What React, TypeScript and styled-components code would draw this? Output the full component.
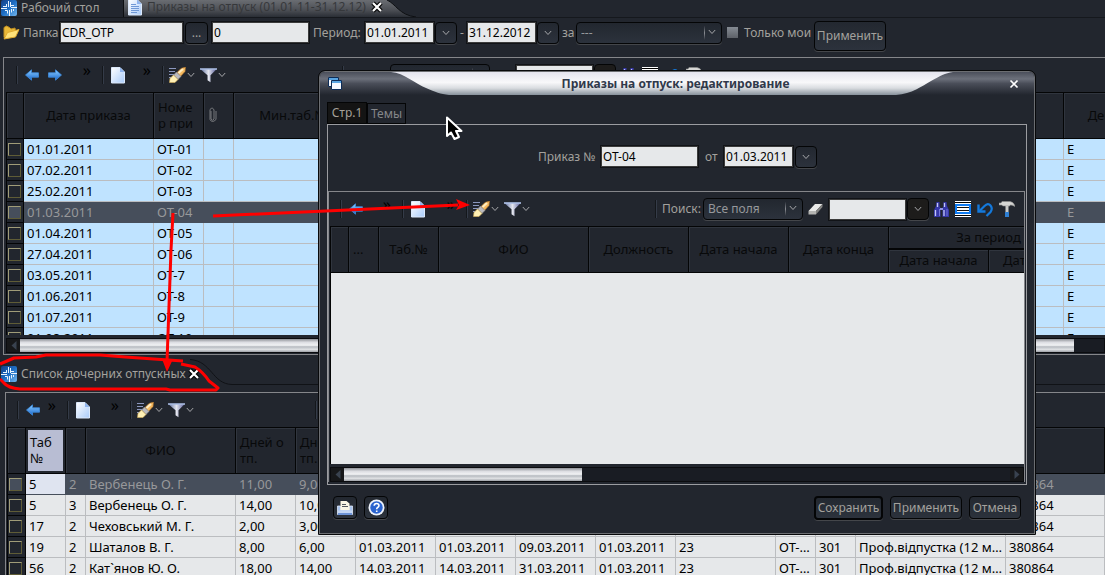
import React from "react";
import styled, { createGlobalStyle, css } from "styled-components";

const c = {
  bg: "#22262e",
  text: "#a3a19d",
  line: "#85868a",
  black: "#040506",
  field: "#e6e8ea",
  blue: "#bfe3ff",
  selected: "#464e5b",
  selectedText: "#97989a",
  red: "#ff0000",
};

const GlobalStyle = createGlobalStyle`
  *, *::before, *::after { box-sizing: border-box; }
  body {
    margin: 0;
    background: ${c.bg};
    color: ${c.text};
    font: 12px/16px "Noto Sans", "Open Sans", sans-serif;
    overflow: hidden;
  }
  button, input, select { font: inherit; color: inherit; margin: 0; }
`;

const Page = styled.div`
  position: relative;
  display: flex;
  flex-direction: column;
  height: 100vh;
  overflow: hidden;
`;

/* ---------- tabs ---------- */

const TopTabs = styled.nav`
  display: flex;
  flex: none;
  height: 18px;
  border-bottom: 1px solid #15181d;
`;

const DesktopTab = styled.a`
  display: flex;
  align-items: center;
  gap: 4px;
  width: 124px;
  height: 17px;
  padding: 0 0 2px 1px;
  border-right: 1px solid #0d0f12;
  color: ${c.text};
  text-decoration: none;
`;

const OrdersTab = styled.div`
  position: relative;
  display: flex;
  align-items: center;
  width: 292px;
  height: 17px;
  padding: 0 0 3px 4px;
  color: #36383b;

  & > svg:first-child { position: absolute; left: 0; top: 0; }
  & > svg + svg { position: relative; flex: none; margin-right: 5px; }
`;

const TabTitle = styled.span`
  position: relative;
  width: 224px;
  white-space: nowrap;
`;

const TabClose = styled.button`
  position: relative;
  display: flex;
  padding: 0;
  border: 0;
  background: none;
`;

const ChildTabs = styled.nav`
  position: relative;
  flex: none;
  display: flex;
  align-items: center;
  gap: 4px;
  height: 37px;
  padding: 0 0 0 1px;

  & > svg:last-child { position: absolute; left: 190px; top: 4px; }
`;

const ChildTitle = styled.span`
  width: 163px;
  white-space: nowrap;
`;

/* ---------- form controls ---------- */

const FilterBar = styled.form`
  display: flex;
  flex: none;
  align-items: flex-start;
  height: 39px;
  padding: 3px;
  white-space: nowrap;
`;

const FilterFields = styled.div`
  display: flex;
  align-items: center;
  height: 23px;
  width: 811px;
`;

const Label = styled.label<{ $w: number }>`
  flex: none;
  width: ${(p) => p.$w}px;
`;

const Field = styled.input<{ $w: number }>`
  flex: none;
  width: ${(p) => p.$w}px;
  height: 23px;
  padding: 0 2px;
  border: 1px solid #111317;
  outline: 1px solid #3b3b3b;
  outline-offset: -2px;
  background: ${c.field};
  color: #000;
`;

const Button = styled.button<{ $w?: number; $h?: number; $dark?: boolean; $primary?: boolean }>`
  display: flex;
  flex: none;
  align-items: center;
  justify-content: center;
  width: ${(p) => p.$w ?? 22}px;
  height: ${(p) => p.$h ?? 22}px;
  padding: 0;
  border: ${(p) => (p.$primary ? 2 : 1)}px solid ${c.black};
  border-radius: 4px;
  background: ${(p) => (p.$dark ? "#1d1c1b" : "linear-gradient(#232830, #2c323c)")};
  box-shadow: 0 1px 0 #44464a;
  color: ${c.text};
`;

const SelectBox = styled.div<{ $w: number }>`
  position: relative;
  flex: none;
  width: ${(p) => p.$w}px;
  height: 22px;

  & > svg { position: absolute; right: 6px; top: 7px; pointer-events: none; }
  &::after {
    content: "";
    position: absolute;
    right: 17px;
    top: 4px;
    width: 1px;
    height: 14px;
    background: linear-gradient(#2a2f38, #8b8e94, #2a2f38);
  }
`;

const Select = styled.select`
  appearance: none;
  width: 100%;
  height: 100%;
  padding: 0 20px 0 4px;
  border: 1px solid ${c.black};
  border-radius: 4px;
  background: linear-gradient(#22272f, #2c323c);
  box-shadow: 0 1px 0 #44464a;
  color: #96989b;
`;

const OnlyMine = styled.input`
  appearance: none;
  flex: none;
  width: 11px;
  height: 11px;
  background: linear-gradient(#858b93, #5d6168);
`;

const Spacer = styled.span<{ $w: number }>`
  flex: none;
  width: ${(p) => p.$w}px;
`;

/* ---------- toolbar ---------- */

const Bar = styled.div`
  display: flex;
  align-items: center;
  height: 34px;
  padding-left: 10px;
`;

const Group = styled.div<{ $w?: number }>`
  display: flex;
  flex: none;
  align-items: center;
  width: ${(p) => (p.$w ? p.$w + "px" : "auto")};
  height: 22px;
  gap: 5px;

  &::before {
    content: "";
    flex: none;
    width: 2px;
    height: 18px;
    background: #14171b;
    border-right: 1px solid #343b48;
  }
`;

const Navigation = styled.div`
  display: flex;
  gap: 9px;
  padding-left: 2px;
`;

const SearchIcons = styled.div`
  display: flex;
  align-items: center;
  gap: 6px;
`;

const Combo = styled.div`
  display: flex;
  align-items: center;
`;

const Tool = styled.button`
  display: flex;
  flex: none;
  align-items: center;
  gap: 1px;
  padding: 0;
  border: 0;
  background: none;
  color: inherit;
`;

const More = styled.button`
  align-self: flex-start;
  margin-left: auto;
  margin-right: 11px;
  padding: 0;
  border: 0;
  background: none;
  color: #000;
  font-size: 16px;
  line-height: 12px;
`;

/* ---------- tables ---------- */

const TopPanel = styled.section`
  flex: none;
  margin-left: 3px;
  padding-left: 2px;
  border: solid ${c.line};
  border-width: 1px 0 1px 1px;
  overflow: hidden;
`;

const ChildPanel = styled.section`
  flex: 1;
  min-height: 0;
  margin-left: 5px;
  padding-left: 1px;
  border: solid ${c.line};
  border-width: 1px 0 0 1px;
  overflow: hidden;
`;

const Viewport = styled.div<{ $h?: number; $fill?: boolean }>`
  height: ${(p) => (p.$h ? p.$h + "px" : "auto")};
  overflow: hidden;
  border-left: 1px solid ${c.black};
  background: ${(p) => (p.$fill ? c.field : "transparent")};
`;

const Table = styled.table<{ $w?: number }>`
  width: ${(p) => (p.$w ? p.$w + "px" : "100%")};
  table-layout: fixed;
  border-collapse: separate;
  border-spacing: 0;
  font-size: 13px;
  line-height: 16px;
`;

const Th = styled.th<{ $h?: number; $left?: boolean; $active?: boolean }>`
  height: ${(p) => p.$h ?? 47}px;
  padding: ${(p) => (p.$left ? "0 4px 2px" : "0 0 2px")};
  border-top: 1px solid ${c.black};
  border-right: 1px solid ${c.black};
  border-bottom: 1px solid ${c.black};
  box-shadow: inset 1px 1px 0 #30353e;
  background: ${c.bg};
  color: #08090a;
  font-weight: 400;
  text-align: ${(p) => (p.$left ? "left" : "center")};
  overflow: hidden;
  white-space: ${(p) => (p.$left ? "pre-line" : "nowrap")};
  ${(p) =>
    p.$active &&
    css`
      background: #b8bdd3;
      box-shadow: inset 0 0 0 2px ${c.bg};
    `}

  & > svg { display: block; margin: 0 auto 0 4px; }
`;

const Row = styled.tr<{ $tone: string; $on?: boolean }>`
  background: ${(p) => (p.$on ? c.selected : p.$tone)};
  color: ${(p) => (p.$on ? c.selectedText : "#000")};
  & > td {
    border-color: ${(p) => (p.$on ? c.selected : "#bbbdc0")};
  }
`;

const Td = styled.td<{ $focus?: boolean }>`
  height: 21px;
  padding: 0 0 0 3px;
  border-right: 1px solid;
  border-bottom: 1px solid;
  overflow: hidden;
  white-space: nowrap;
  text-overflow: ellipsis;
  ${(p) => p.$focus && css`background: #dfe4f0; color: #000;`}
`;

const CheckTd = styled.td`
  height: 21px;
  padding: 0;
  && { border: solid ${c.black}; border-width: 0 1px 1px 0; }
  background: ${c.bg};
`;

const RowCheck = styled.input`
  appearance: none;
  display: block;
  width: 13px;
  height: 13px;
  margin: 0 0 0 1px;
  border: 1px solid;
  border-color: #a09c78 #5f5c36 #5f5c36 #a09c78;
  background: ${c.bg};
  &:checked { background: ${c.selected}; }
`;

/* ---------- scroll bars ---------- */

const ScrollTrack = styled.div`
  display: flex;
  height: 15px;
  margin: 3px 0 1px;
  border: 1px solid #0b0c0f;
  background: #191c23;
`;

const ScrollEnd = styled.button`
  display: flex;
  flex: none;
  align-items: center;
  justify-content: center;
  width: 13px;
  padding: 0;
  border: 0;
  background: #17181a;
`;

const Thumb = styled.div<{ $w: string }>`
  width: ${(p) => p.$w};
  background: linear-gradient(#8d9096, #dcdde2 25%, #f1f2f4 48%, #b6bac0 60%, #dfe1e4 80%, #9da0a6);
`;

const Rest = styled.div`
  flex: 1;
`;

/* ---------- dialog ---------- */

const Dialog = styled.div`
  position: absolute;
  left: 319px;
  top: 71px;
  width: 716px;
  border: 1px solid #6c6e72;
  border-radius: 6px 6px 0 0;
  outline: 1px solid #08090b;
  outline-offset: 0;
  background: ${c.bg};
  overflow: hidden;
`;

const TitleBar = styled.header`
  position: relative;
  display: flex;
  align-items: center;
  justify-content: space-between;
  height: 23px;
  padding: 0 15px 0 8px;
  background: linear-gradient(#4b4f5b, #6c707b 30%, #4a4e59 50%, #22262e);

  & > svg:first-child { position: absolute; left: 0; top: 0; }
  & > *:not(svg:first-child) { position: relative; }
`;

const DialogTitle = styled.h1`
  flex: 1;
  margin: 0;
  font-size: 12px;
  line-height: 16px;
  font-weight: 700;
  color: #30394a;
  text-align: center;
`;

const DialogTabs = styled.div`
  display: flex;
  align-items: flex-end;
  height: 29px;
  padding: 0 7px;
`;

const PageTab = styled.button<{ $on?: boolean }>`
  width: ${(p) => (p.$on ? 40 : 39)}px;
  height: ${(p) => (p.$on ? 22 : 21)}px;
  padding: 0;
  border: 1px solid ${c.black};
  background: ${(p) => (p.$on ? "#141414" : c.bg)};
  color: ${(p) => (p.$on ? "#a5a19a" : "#85878a")};
`;

const PagePane = styled.div`
  margin: 0 7px;
  padding-bottom: 1px;
  border: 1px solid #9b9ca0;
`;

const OrderForm = styled.form`
  display: flex;
  align-items: center;
  height: 66px;
  padding: 0 0 3px 210px;
`;

const InnerPanel = styled.div`
  margin-right: 1px;
  padding: 0 0 0 1px;
  border: solid ${c.line};
  border-width: 1px 1px 0 1px;
`;

const Footer = styled.footer`
  display: flex;
  align-items: center;
  gap: 7px;
  height: 48px;
  padding: 0 13px 3px;
`;

/* ---------- overlay ---------- */

const Overlay = styled.svg`
  position: absolute;
  left: 0;
  top: 0;
  pointer-events: none;
`;

/* ---------- icons ---------- */

const AppIcon = () => (
  <svg width="16" height="16" viewBox="0 0 16 16">
    <defs>
      <linearGradient id="app" x2="1" y2="1">
        <stop stopColor="#123f86" />
        <stop offset=".5" stopColor="#1e6ec4" />
        <stop offset="1" stopColor="#72b6ee" />
      </linearGradient>
    </defs>
    <rect width="16" height="16" rx="2" fill="url(#app)" />
    <path d="M0 8.500h6M7.500 1v6M8.500 10v6M10 7.500h6M2 6.500h4M9.500 2v5M10 5.500h3M4 10.500h2.500v3M10.500 9v3.500M12.500 9v2M5.500 4v2" stroke="#e8f4ff" fill="none" />
  </svg>
);

const DocIcon = ({ lines = false }: { lines?: boolean }) => (
  <svg width="14" height="17" viewBox="0 0 14 17">
    <defs>
      <linearGradient id="doc" x2="1" y2="1">
        <stop stopColor="#ffffff" />
        <stop offset="1" stopColor="#a9cbfa" />
      </linearGradient>
    </defs>
    <path d="M.5.500h8.500l4.500 4.500v11H.500z" fill="url(#doc)" stroke="#dce9fb" />
    <path d="M9 .500V5h4.500z" fill="#8fb4ee" />
    {lines && <path d="M3 5.500h5M3 7.500h8M3 9.500h8M3 11.500h8M3 13.500h6" stroke="#6f98d6" />}
  </svg>
);

const FolderIcon = () => (
  <svg width="17" height="15" viewBox="0 0 17 15">
    <path d="M1 12.500V2.500L3.500 1l3 1.500L8 4l4-1 .5 3" fill="#e9b838" stroke="#c08f22" />
    <path d="M1 14l3.500-6.500L16 4.500 12.500 12z" fill="#ffe27a" stroke="#e0a92c" />
  </svg>
);

const ArrowIcon = ({ right = false }: { right?: boolean }) => (
  <svg width="14" height="12" viewBox="0 0 14 12">
    <defs>
      <linearGradient id="arr" x2="0" y2="1">
        <stop stopColor="#8fd0ff" />
        <stop offset="1" stopColor="#1766cf" />
      </linearGradient>
    </defs>
    <path
      d="M.5 6L6.500.800v3h7v4.400h-7v3z"
      fill="url(#arr)"
      stroke="#3d8de0"
      strokeWidth=".8"
      transform={right ? "matrix(-1 0 0 1 14 0)" : undefined}
    />
  </svg>
);

const BrushIcon = () => (
  <svg width="17" height="16" viewBox="0 0 17 16">
    <path d="M0 1.500h7M0 4.500h6M0 7.500h5M0 10.500h2" stroke="#8b97bd" />
    <path d="M7.500 6L12 1.500 16.500 0 16 4.500 11 10z" fill="#f7bb62" stroke="#a8702c" strokeWidth=".7" />
    <path d="M9.500 6L14 2" stroke="#ffeec2" strokeWidth="2" />
    <path d="M4.500 8l3-3L12 9.500 9 12.500z" fill="#b9b9bd" stroke="#77777b" strokeWidth=".6" />
    <path d="M4.500 8L9 12.500 6 15.500H.500L1 11.500z" fill="#fff0b4" stroke="#d8b25a" strokeWidth=".6" />
  </svg>
);

const FunnelIcon = () => (
  <svg width="17" height="15" viewBox="0 0 17 15">
    <defs>
      <linearGradient id="fun">
        <stop stopColor="#5c6d9e" />
        <stop offset=".5" stopColor="#e4e6ee" />
        <stop offset="1" stopColor="#5a5f9b" />
      </linearGradient>
    </defs>
    <path d="M.5 1.200h16l-6 6v7l-3-2v-5z" fill="url(#fun)" />
    <path d="M0 1h17" stroke="#b8ccf5" strokeWidth="1.400" />
  </svg>
);

const Chevron = () => (
  <svg width="8" height="6" viewBox="0 0 8 6">
    <path d="M.8 1L4 4.500 7.200 1" fill="none" stroke="#a6a7aa" />
  </svg>
);

const CloseIcon = () => (
  <svg width="12" height="12" viewBox="0 0 12 12">
    <path d="M2 2l8 8M10 2l-8 8" stroke="#000" strokeWidth="4.500" />
    <path d="M2 2l8 8M10 2l-8 8" stroke="#fff" strokeWidth="2.200" />
  </svg>
);

const ClipIcon = () => (
  <svg width="10" height="16" viewBox="0 0 10 16">
    <path d="M3 4v8q1.500 2.500 3 0V3Q4.500-.500 2 2.500v10q2 4 6 0V4" fill="none" stroke="#77797d" />
  </svg>
);

const EraserIcon = () => (
  <svg width="15" height="12" viewBox="0 0 15 12">
    <path d="M.5 8L7 1h7.500L8 8z" fill="#e9e9e7" />
    <path d="M.5 8H8v3.500H.500z" fill="#b4b4b2" />
    <path d="M8 8l6.500-7v3L8 11.500z" fill="#828280" />
  </svg>
);

const BinocularsIcon = () => (
  <svg width="15" height="15" viewBox="0 0 15 15">
    <path d="M2.500 0h3v4l1 2v9H0V8l2-4zM9.500 0h3l.5 4 2 4v7H8.500V6l1-2z" fill="#3637a8" />
    <path d="M3.500 1v4M1.500 8v6M10.500 1v4M10 8v6" stroke="#c3c6f7" strokeWidth="1.300" />
    <path d="M5.500 7v7M13 7v7" stroke="#7376d8" />
    <path d="M6 7h3" stroke="#8f92e4" strokeWidth="2" />
  </svg>
);

const RowsIcon = () => (
  <svg width="16" height="16" viewBox="0 0 16 16">
    <path fill="#fff" d="M0 0h16v16H0z" />
    <path d="M0 1.500h16M0 14.500h16" stroke="#000" />
    <path d="M0 3h16v10H0z" fill="#0f7bf2" />
    <path d="M2 5h12v6H2z" fill="#fff" />
    <path d="M2 6.500h12M2 9.500h12" stroke="#111" />
  </svg>
);

const UndoIcon = () => (
  <svg width="16" height="15" viewBox="0 0 16 15">
    <path d="M1.500 2.500v7h7" fill="none" stroke="#1479dc" strokeWidth="2.400" />
    <path d="M2.500 9L7.500 4Q11 .500 13.500 3.500T13.500 10L9.500 14" fill="none" stroke="#1479dc" strokeWidth="2.200" />
  </svg>
);

const HammerIcon = () => (
  <svg width="16" height="16" viewBox="0 0 16 16">
    <path d="M0 2h2l1-1.500h8q4 .500 5 5-3-2-5-1.500v1H4L2.500 4H0z" fill="#d6d6d4" stroke="#8c8c8a" strokeWidth=".6" />
    <path d="M6.500 5h3v7h-3z" fill="#c9c9c7" />
    <path d="M6 11h4v5H6z" fill="#2e7ed2" />
  </svg>
);

const WindowsIcon = () => (
  <svg width="14" height="14" viewBox="0 0 14 14">
    {[0, 3].map((o) => (
      <g key={o} transform={`translate(${o} ${o})`}>
        <path d="M.5.500h10v9H.500z" fill="#f5f8ff" stroke="#0d2c57" />
        <path d="M1 2h9" stroke="#5aa5e2" strokeWidth="2" />
      </g>
    ))}
  </svg>
);

const TitleClose = () => (
  <svg width="10" height="10" viewBox="0 0 10 10">
    <path d="M1.500 1.500l7 7M8.500 1.500l-7 7" stroke="#fff" strokeWidth="1.700" />
  </svg>
);

const PrinterIcon = () => (
  <svg width="16" height="16" viewBox="0 0 16 16">
    <path d="M.500 6h3v4h9V6h3v8.500H.500z" fill="#a9c4ee" stroke="#dfe8f8" strokeWidth=".8" />
    <path d="M3.500 1h6l3 2.500V10h-9z" fill="#fbf6e4" />
    <path d="M5 4.500h4M5 6.500h6" stroke="#55585e" />
    <path d="M1 10.500h14V13H1z" fill="#c4d6f4" />
    <path d="M1 13h14v2H1z" fill="#6d93d6" />
  </svg>
);

const HelpIcon = () => (
  <svg width="17" height="17" viewBox="0 0 17 17">
    <circle cx="8.500" cy="8.500" r="8" fill="#eef3fb" />
    <circle cx="8.500" cy="8.500" r="6.200" fill="#2a63cf" />
    <path d="M6.200 6.800q0-2.300 2.400-2.300T11 6.600q0 1.200-1.300 1.800-1 .5-1 1.800M8.700 11.400v1.500" fill="none" stroke="#fff" strokeWidth="1.600" />
  </svg>
);

const Triangle = ({ right = false }: { right?: boolean }) => (
  <svg width="6" height="9" viewBox="0 0 6 9">
    <path d={right ? "M.5 0L5.500 4.500.500 9z" : "M5.500 0L.500 4.500 5.500 9z"} fill="#39424f" />
  </svg>
);

/* ---------- shared pieces ---------- */

const DropButton = ({ dark = false, label }: { dark?: boolean; label: string }) => (
  <Button type="button" $dark={dark} aria-label={label}>
    <Chevron />
  </Button>
);

type ToolbarProps = { widths: [number, number, number]; forward?: boolean; search?: boolean; id: string };

const Toolbar = ({ widths, forward, search, id }: ToolbarProps) => (
  <Bar>
    <Group $w={widths[0]}>
      <Navigation>
        <Tool aria-label="Назад"><ArrowIcon /></Tool>
        {forward && <Tool aria-label="Вперед"><ArrowIcon right /></Tool>}
      </Navigation>
      <More aria-label="Еще">»</More>
    </Group>
    <Group $w={widths[1]}>
      <Navigation>
        <Tool aria-label="Создать"><DocIcon /></Tool>
      </Navigation>
      <More aria-label="Еще">»</More>
    </Group>
    <Group $w={widths[2]}>
      <Tool aria-label="Очистить"><BrushIcon /><Chevron /></Tool>
      <Tool aria-label="Фильтр"><FunnelIcon /><Chevron /></Tool>
    </Group>
    <Group>
      {search && (
        <>
          <Label $w={36} htmlFor={id + "-scope"}>Поиск:</Label>
          <SelectBox $w={100}>
            <Select id={id + "-scope"}><option>Все поля</option></Select>
            <Chevron />
          </SelectBox>
          <Tool aria-label="Стереть"><EraserIcon /></Tool>
          <Combo>
            <Field $w={79} aria-label="Строка поиска" />
            <DropButton dark label="История поиска" />
          </Combo>
          <SearchIcons>
            <Tool aria-label="Найти"><BinocularsIcon /></Tool>
            <Tool aria-label="Строки"><RowsIcon /></Tool>
            <Tool aria-label="Отменить"><UndoIcon /></Tool>
            <Tool aria-label="Настройка"><HammerIcon /></Tool>
          </SearchIcons>
        </>
      )}
    </Group>
  </Bar>
);

const Columns = ({ widths }: { widths: (number | null)[] }) => (
  <colgroup>
    {widths.map((w, i) => (
      <col key={i} style={w ? { width: w } : undefined} />
    ))}
  </colgroup>
);

/* ---------- data ---------- */

const orders = [
  ["01.01.2011", "ОТ-01"],
  ["07.02.2011", "ОТ-02"],
  ["25.02.2011", "ОТ-03"],
  ["01.03.2011", "ОТ-04"],
  ["01.04.2011", "ОТ-05"],
  ["27.04.2011", "ОТ-06"],
  ["03.05.2011", "ОТ-7"],
  ["01.06.2011", "ОТ-8"],
  ["01.07.2011", "ОТ-9"],
  ["01.08.2011", "ОТ-10"],
];

const prof = "Проф.відпустка (12 місяців)";
const leaves = [
  ["5", "2", "Вербенець О. Г.", "11,00", "9,00", "", "", "", "", "", "", "", "", "380864"],
  ["5", "3", "Вербенець О. Г.", "14,00", "10,00", "", "", "", "", "", "", "", "", "380864"],
  ["17", "2", "Чеховський М. Г.", "2,00", "3,00", "", "", "", "", "", "", "", "", "380864"],
  ["19", "2", "Шаталов В. Г.", "8,00", "6,00", "01.03.2011", "01.03.2011", "09.03.2011", "01.03.2011", "23", "ОТ-04/1", "301", prof, "380864"],
  ["56", "2", "Кат`янов Ю. О.", "18,00", "14,00", "14.03.2011", "14.03.2011", "31.03.2011", "01.03.2011", "23", "ОТ-04/2", "301", prof, "380864"],
];

/* ---------- sections ---------- */

const OrdersTable = () => (
  <Viewport $h={243}>
    <Table $w={1137}>
      <Columns widths={[17, 130, 50, 30, 120, 710, null]} />
      <thead>
        <tr>
          <Th />
          <Th>Дата приказа</Th>
          <Th $left>{"Номе\nр при"}</Th>
          <Th><ClipIcon /></Th>
          <Th>Мин.таб.№</Th>
          <Th />
          <Th>День</Th>
        </tr>
      </thead>
      <tbody>
        {orders.map(([date, num], i) => (
          <Row key={num} $tone={c.blue} $on={i === 3}>
            <CheckTd>
              <RowCheck type="checkbox" aria-label={num} defaultChecked={i === 3} />
            </CheckTd>
            <Td>{date}</Td>
            <Td>{num}</Td>
            <Td />
            <Td />
            <Td />
            <Td>Е</Td>
          </Row>
        ))}
      </tbody>
    </Table>
  </Viewport>
);

const LeavesTable = () => (
  <Viewport>
    <Table>
      <Columns widths={[18, 40, 20, 150, 60, 60, 80, 80, 80, 80, 100, 40, 40, 150, null]} />
      <thead>
        <tr>
          <Th />
          <Th $left $active>{"Таб\n№"}</Th>
          <Th />
          <Th>ФИО</Th>
          <Th $left>{"Дней о\nтп."}</Th>
          <Th $left>{"Дней о\nтп."}</Th>
          {Array.from({ length: 9 }, (_, i) => <Th key={i} />)}
        </tr>
      </thead>
      <tbody>
        {leaves.map((cells, r) => (
          <Row key={r} $tone={c.field} $on={r === 0}>
            <CheckTd>
              <RowCheck type="checkbox" aria-label={cells[2]} defaultChecked={r === 0} />
            </CheckTd>
            {cells.map((cell, i) => (
              <Td key={i} $focus={r === 0 && i === 0}>{cell}</Td>
            ))}
          </Row>
        ))}
      </tbody>
    </Table>
  </Viewport>
);

const PeriodTable = () => (
  <Viewport $h={238} $fill>
    <Table $w={758}>
      <Columns widths={[18, 30, 60, 150, 100, 100, 100, 100, 100]} />
      <thead>
        <tr>
          <Th rowSpan={2} />
          <Th rowSpan={2} $left>...</Th>
          <Th rowSpan={2}>Таб.№</Th>
          <Th rowSpan={2}>ФИО</Th>
          <Th rowSpan={2}>Должность</Th>
          <Th rowSpan={2}>Дата начала</Th>
          <Th rowSpan={2}>Дата конца</Th>
          <Th colSpan={2} $h={23}>За период</Th>
        </tr>
        <tr>
          <Th $h={24}>Дата начала</Th>
          <Th $h={24}>Дата конца</Th>
        </tr>
      </thead>
    </Table>
  </Viewport>
);

const EditDialog = () => (
  <Dialog role="dialog" aria-labelledby="dialog-title">
    <TitleBar>
      <svg width="714" height="23" viewBox="0 0 714 23">
        <defs>
          <linearGradient id="swoosh" x2="0" y2="1">
            <stop stopColor="#e4e4ee" />
            <stop offset=".45" stopColor="#f8f8fa" />
            <stop offset=".7" stopColor="#d9dce0" />
            <stop offset="1" stopColor="#87919b" />
          </linearGradient>
        </defs>
        <path d="M71 0C84 1 96 12 106 16S120 22 129 23H576C592 22 602 14 611 9S625 1 633 0z" fill="url(#swoosh)" />
      </svg>
      <WindowsIcon />
      <DialogTitle id="dialog-title">Приказы на отпуск: редактирование</DialogTitle>
      <Tool aria-label="Закрыть"><TitleClose /></Tool>
    </TitleBar>
    <DialogTabs>
      <PageTab $on>Стр.1</PageTab>
      <PageTab>Темы</PageTab>
    </DialogTabs>
    <PagePane>
      <OrderForm>
        <Label $w={62} htmlFor="order-no">Приказ №</Label>
        <Field id="order-no" $w={99} defaultValue="ОТ-04" />
        <Spacer $w={6} />
        <Label $w={18} htmlFor="order-date">от</Label>
        <Field id="order-date" $w={71} defaultValue="01.03.2011" />
        <Spacer $w={1} />
        <DropButton label="Календарь" />
      </OrderForm>
      <InnerPanel>
        <Toolbar id="edit" widths={[62, 64, 189]} search />
        <PeriodTable />
        <ScrollTrack>
          <ScrollEnd aria-label="Влево"><Triangle /></ScrollEnd>
          <Thumb $w="238px" />
          <Rest />
          <ScrollEnd aria-label="Вправо"><Triangle right /></ScrollEnd>
        </ScrollTrack>
      </InnerPanel>
    </PagePane>
    <Footer>
      <Button $w={24} $h={23} aria-label="Печать"><PrinterIcon /></Button>
      <Button $w={24} $h={23} aria-label="Справка"><HelpIcon /></Button>
      <Rest />
      <Button $w={69} $h={24} $primary>Сохранить</Button>
      <Button $w={72} $h={23}>Применить</Button>
      <Button $w={52} $h={23}>Отмена</Button>
    </Footer>
  </Dialog>
);

const Annotations = () => (
  <Overlay width="1105" height="575" viewBox="0 0 1105 575" aria-hidden="true">
    <g fill="none" stroke={c.red} strokeWidth="3" strokeLinejoin="round">
      <path d="M0 364L14 358 36 357 46 355H100L125 357 183 361" />
      <path d="M181 364L195 367Q203 372 209 381L218 388 216 390H170L166 389H20Q8 388 4 383L0 379" />
      <path d="M173 213L171 250 167 362M213 216L458 205" />
    </g>
    <path d="M162 359H173L167 372zM456 199L470 205 456 210 459 205z" fill={c.red} />
    <path d="M447 117.500V136L451 132.500 454.500 139 459 137 456 131H461.500z" fill="#000" stroke="#fff" strokeWidth="2" strokeLinejoin="round" />
  </Overlay>
);

export default function App() {
  return (
    <>
      <GlobalStyle />
      <Page>
        <TopTabs>
          <DesktopTab href="#desktop"><AppIcon />Рабочий стол</DesktopTab>
          <OrdersTab>
            <svg width="292" height="17" viewBox="0 0 292 17">
              <defs>
                <linearGradient id="tab" x2="0" y2="1">
                  <stop stopColor="#6a6d72" />
                  <stop offset=".6" stopColor="#4b4e54" />
                  <stop offset="1" stopColor="#2a2e35" />
                </linearGradient>
              </defs>
              <path d="M0 0H263C272 4 275 15 292 17H0z" fill="url(#tab)" />
              <path d="M263 0C272 4 275 15 292 17" fill="none" stroke="#0e1013" />
            </svg>
            <DocIcon lines />
            <TabTitle>Приказы на отпуск (01.01.11-31.12.12)</TabTitle>
            <TabClose aria-label="Закрыть вкладку"><CloseIcon /></TabClose>
          </OrdersTab>
        </TopTabs>

        <FilterBar>
          <FilterFields>
            <FolderIcon />
            <Spacer $w={3} />
            <Label $w={36} htmlFor="folder">Папка</Label>
            <Field id="folder" $w={125} defaultValue="CDR_OTP" />
            <Spacer $w={1} />
            <Button type="button" $w={23} aria-label="Выбрать папку">...</Button>
            <Spacer $w={3} />
            <Field $w={99} defaultValue="0" aria-label="Номер" />
            <Spacer $w={3} />
            <Label $w={51} htmlFor="from">Период:</Label>
            <Field id="from" $w={71} defaultValue="01.01.2011" />
            <DropButton label="Дата начала" />
            <Spacer $w={3} />
            <Label $w={6} htmlFor="to">-</Label>
            <Field id="to" $w={71} defaultValue="31.12.2012" />
            <DropButton label="Дата конца" />
            <Spacer $w={3} />
            <Label $w={14} htmlFor="span">за</Label>
            <SelectBox $w={146}>
              <Select id="span"><option>---</option></Select>
              <Chevron />
            </SelectBox>
            <Spacer $w={5} />
            <OnlyMine id="mine" type="checkbox" />
            <Spacer $w={6} />
            <Label $w={69} htmlFor="mine">Только мои</Label>
          </FilterFields>
          <Button type="button" $w={72} $h={30}>Применить</Button>
        </FilterBar>

        <TopPanel>
          <Toolbar id="orders" widths={[86, 60, 180]} forward search />
          <OrdersTable />
          <ScrollTrack>
            <ScrollEnd aria-label="Влево"><Triangle /></ScrollEnd>
            <Thumb $w="1054px" />
            <Rest />
          </ScrollTrack>
        </TopPanel>

        <ChildTabs>
          <AppIcon />
          <ChildTitle>Список дочерних отпускных</ChildTitle>
          <TabClose aria-label="Закрыть вкладку"><CloseIcon /></TabClose>
          <svg width="915" height="27" viewBox="0 0 915 27">
            <path d="M0 .500C22 2 22 25 42 25.500H915" fill="none" stroke="#101216" />
          </svg>
        </ChildTabs>

        <ChildPanel>
          <Toolbar id="leaves" widths={[50, 63, 185]} />
          <LeavesTable />
        </ChildPanel>

        <EditDialog />
        <Annotations />
      </Page>
    </>
  );
}
